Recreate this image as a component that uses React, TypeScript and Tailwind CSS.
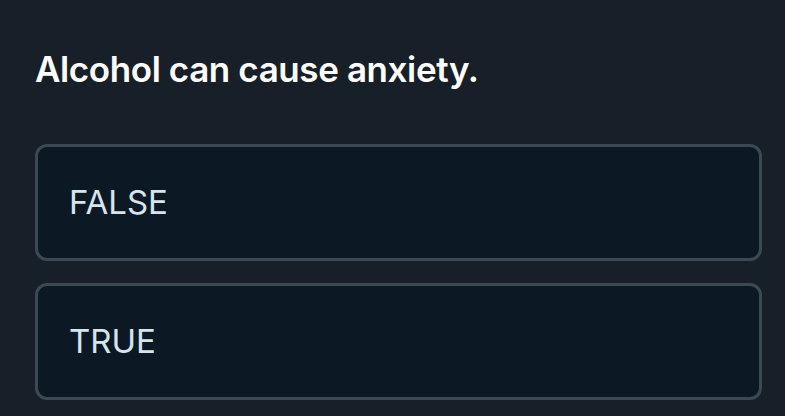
import React from 'react';

const options = ['FALSE', 'TRUE'];

export default function App() {
  return (
    <div
      className="w-[785px] h-[416px] overflow-hidden bg-[#172028] px-[35px] pt-[47px]"
      style={{ fontFamily: 'Inter, "Liberation Sans", sans-serif' }}
    >
      <h1 className="text-[35px] leading-[44px] font-semibold tracking-[-0.4px] text-white">
        Alcohol can cause anxiety.
      </h1>
      <div className="mt-[53px] flex flex-col gap-[22px]">
        {options.map((label) => (
          <button
            key={label}
            className="h-[117px] w-[727px] rounded-[12px] border-[3px] border-[#3b4953] bg-[#0c1924] px-[31px] text-left text-[33px] text-[#d6e4ec]"
          >
            {label}
          </button>
        ))}
      </div>
    </div>
  );
}
